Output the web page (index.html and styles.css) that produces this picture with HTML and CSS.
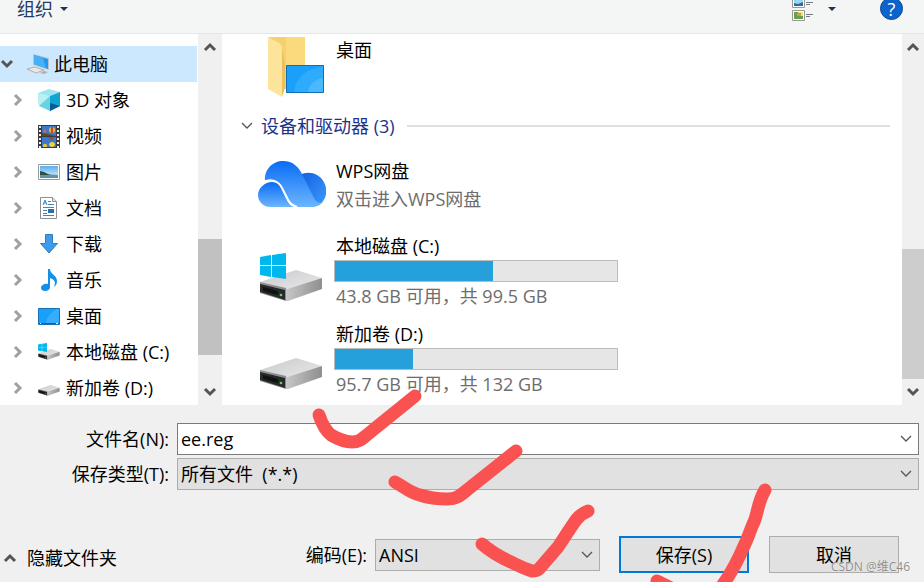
FILE: index.html
```html
<!DOCTYPE html>
<html lang="zh-CN">
<head>
  <meta charset="UTF-8" />
  <meta name="viewport" content="width=device-width, initial-scale=1.0"/>
  <title>另存为</title>
  <link rel="stylesheet" href="styles.css">
</head>
<body>
  <!-- shared symbols -->
  <svg class="defs" width="0" height="0" aria-hidden="true">
    <defs>
      <linearGradient id="gCloudTop" x1="0" y1="0" x2="0" y2="1">
        <stop offset="0" stop-color="#0a6cf5"/><stop offset="1" stop-color="#6cb6ff"/>
      </linearGradient>
      <linearGradient id="gCloudRight" x1="0" y1="0" x2="1" y2="1">
        <stop offset="0" stop-color="#1260dd"/><stop offset="1" stop-color="#3f9bff"/>
      </linearGradient>
      <linearGradient id="gDrive" x1="0" y1="0" x2="1" y2="1">
        <stop offset="0" stop-color="#c9cacc"/><stop offset="1" stop-color="#e8e8ea"/>
      </linearGradient>
      <linearGradient id="gDriveSide" x1="0" y1="0" x2="1" y2="0">
        <stop offset="0" stop-color="#c8c8c8"/><stop offset="1" stop-color="#8f8f8f"/>
      </linearGradient>
      <linearGradient id="gSky" x1="0" y1="0" x2="0" y2="1">
        <stop offset="0" stop-color="#5aaef0"/><stop offset="1" stop-color="#e2f3fb"/>
      </linearGradient>
    </defs>
    <symbol id="right" viewBox="0 0 10 14"><path d="M2 2l5 5-5 5" fill="none" stroke="#a0a0a0" stroke-width="3"/></symbol>
    <symbol id="up" viewBox="0 0 14 10"><path d="M2 8l5-5 5 5" fill="none" stroke="#555" stroke-width="3"/></symbol>
    <symbol id="down" viewBox="0 0 14 10"><path d="M2 2l5 5 5-5" fill="none" stroke="#555" stroke-width="3"/></symbol>
    <symbol id="thin" viewBox="0 0 14 10"><path d="M2 2l5 5 5-5" fill="none" stroke="#555" stroke-width="1.3"/></symbol>
    <symbol id="caret" viewBox="0 0 8 4"><path d="M0 0h8L4 4z" fill="#1c3550"/></symbol>
    <symbol id="drive" viewBox="0 0 64 34">
      <path d="M1 13L37 1l26 8-35 11z" fill="url(#gDrive)"/>
      <path d="M26 19l2 1L63 9v11L29 32h-3z" fill="url(#gDriveSide)"/>
      <path d="M1 13l26 6v13L1 24z" fill="#8d8d8d"/>
      <path d="M1 15l25 6v10L1 23z" fill="#262a2a"/>
      <path d="M4 18l15 4v4L4 22z" fill="#111"/>
      <circle cx="22" cy="26" r="1.300" fill="#65d45a"/>
    </symbol>
    <symbol id="winlogo" viewBox="0 0 26 26">
      <path d="M0 4l11-2v10H0zM12 2l14-2v12H12zM0 13h11v11L0 22zM12 13h14v13l-14-2z" fill="#00b7ee"/>
    </symbol>
  </svg>

  <div class="dialog">
    <header class="toolbar">
      <button class="organize">组织 <svg width="8" height="4"><use href="#caret"/></svg></button>
      <div class="tools">
        <button class="view" aria-label="更改视图">
          <svg width="21" height="24" viewBox="0 0 21 24">
            <path d="M.5.5h12v10H.5zM.5 13.500h12v10H.5z" fill="#fff" stroke="#999"/>
            <path d="M2 2h9v7H2z" fill="#9bd3f3"/><path d="M2 6l4 1 5-2v4H2z" fill="#2b6f93"/>
            <path d="M2 15h9v7H2z" fill="#dce78c"/><path d="M2 15h4l2 4h3v3H2z" fill="#6aa04b"/><path d="M5 16h4v3H5z" fill="#c9a13d"/>
            <path d="M14 5.500h7M14 7.500h4M14 17.500h7M14 19.500h4" stroke="#747b83"/>
          </svg>
        </button>
        <button class="view-more" aria-label="更多选项"><svg width="8" height="4"><use href="#caret"/></svg></button>
        <button class="help" aria-label="帮助">?</button>
      </div>
    </header>

    <main class="panes">
      <nav class="tree">
        <ul>
          <li class="root"><svg class="arrow" width="14" height="10"><use href="#down"/></svg>
            <svg class="icon" width="24" height="22" viewBox="0 0 24 22">
              <path d="M7 1l16 4v12L7 12z" fill="#b9c5ce"/><path d="M8 2l14 4v10L8 11z" fill="#2497ec"/><path d="M8 2l9 3 3 10-12-4z" fill="#46b1f8"/>
              <path d="M1 16l8-2 9 3-8 3z" fill="#e8e8e8" stroke="#b5aeac"/><path d="M14 20l4-2 4 1-4 2z" fill="#c3a7a0"/>
            </svg>
            <a href="#">此电脑</a></li>
          <li><svg class="arrow" width="10" height="14"><use href="#right"/></svg>
            <svg class="icon" width="22" height="22" viewBox="0 0 22 22">
              <path d="M0 4l11-4 11 3-10 4z" fill="#9de5f1"/><path d="M0 4l12 3v15L1 17z" fill="#66d4e5"/><path d="M0 4l12 3-11 10z" fill="#b9f1f5"/>
              <path d="M12 7l10-4v14l-10 5z" fill="#10a4d3"/><path d="M12 14l10 3-10 5z" fill="#0a5c98"/>
            </svg>
            <a href="#">3D 对象</a></li>
          <li><svg class="arrow" width="10" height="14"><use href="#right"/></svg>
            <svg class="icon" width="22" height="23" viewBox="0 0 22 23">
              <path d="M0 0h22v23H0z" fill="#3b3b3b"/><path d="M4 1h14v10H4zM4 12h14v10H4z" fill="#3d78cc"/>
              <path d="M2 1v22M20 1v22" stroke="#eee" stroke-width="2" stroke-dasharray="2 2"/>
              <circle cx="14" cy="5" r="3" fill="#edb63a"/><path d="M13 2h2v6h-2z" fill="#c94a27"/><path d="M4 8l6 1 8 2H4z" fill="#5d4a25"/>
              <path d="M11 20c0-4 6-4 6 0l-2 2h-2z" fill="#f4d32c"/><circle cx="7" cy="6" r="1.500" fill="#d66b37"/><path d="M5 21c0-3 4-3 4 0v1H5z" fill="#efc327"/><path d="M10 12h6l-2 3h-2z" fill="#a14b35"/>
            </svg>
            <a href="#">视频</a></li>
          <li><svg class="arrow" width="10" height="14"><use href="#right"/></svg>
            <svg class="icon" width="22" height="16" viewBox="0 0 22 16">
              <path d="M.5.5h21v15H.5z" fill="#fff" stroke="#9a9a9a"/><path d="M2 2h18v12H2z" fill="url(#gSky)"/>
              <path d="M2 8l6 2 12 1v3H2z" fill="#5f93a8"/><path d="M2 7l4 1 6 3H2z" fill="#2b5145"/>
            </svg>
            <a href="#">图片</a></li>
          <li><svg class="arrow" width="10" height="14"><use href="#right"/></svg>
            <svg class="icon" width="22" height="22" viewBox="0 0 22 22">
              <path d="M2.500.5h12l4 4v17h-16z" fill="#fff" stroke="#8a9095"/><path d="M14.500.5v4h4" fill="#e5e5e5" stroke="#8a9095"/>
              <path d="M5 8l2-5 2 5M6 6h2M10 4.500h3M10 7.500h6M5 10.500h11M5 13.500h4M5 16.500h4M5 18.500h11" fill="none" stroke="#3a87c0"/>
              <path d="M10 12h6v4h-6z" fill="#2d6fa5"/>
            </svg>
            <a href="#">文档</a></li>
          <li><svg class="arrow" width="10" height="14"><use href="#right"/></svg>
            <svg class="icon" width="22" height="20" viewBox="0 0 22 20"><path d="M7.500.5h7v9h5L11 19 2.500 9.500h5z" fill="#3f9bea" stroke="#2d7cc4"/></svg>
            <a href="#">下载</a></li>
          <li><svg class="arrow" width="10" height="14"><use href="#right"/></svg>
            <svg class="icon" width="22" height="22" viewBox="0 0 22 22">
              <path d="M10 0h2c0 5 7 6 7 12 0 3-1 4-3 6 2-5 1-7-4-9v9c0 3-3 4-5 4s-4-1-4-3c0-3 4-5 7-4z" fill="#1390ea"/>
            </svg>
            <a href="#">音乐</a></li>
          <li><svg class="arrow" width="10" height="14"><use href="#right"/></svg>
            <svg class="icon" width="22" height="17" viewBox="0 0 22 17">
              <path d="M.5.5h21v16H.5z" fill="#18a0fb" stroke="#1672b4"/><path d="M8 15c1-6 4-10 11-14h2v14z" fill="#36aefd"/><path d="M1 15.500h20" stroke="#0a63a8"/><path d="M2 15.500h1M18 15.500h2" stroke="#fff"/>
            </svg>
            <a href="#">桌面</a></li>
          <li><svg class="arrow" width="10" height="14"><use href="#right"/></svg>
            <svg class="icon" width="22" height="18" viewBox="0 0 22 18">
              <use href="#drive" x="0" y="5" width="22" height="13"/><use href="#winlogo" width="9" height="9"/>
            </svg>
            <a href="#">本地磁盘 (C:)</a></li>
          <li><svg class="arrow" width="10" height="14"><use href="#right"/></svg>
            <svg class="icon" width="22" height="18" viewBox="0 0 22 18"><use href="#drive" x="0" y="5" width="22" height="13"/></svg>
            <a href="#">新加卷 (D:)</a></li>
        </ul>
      </nav>
      <div class="scrollbar tree-scroll">
        <button aria-label="向上"><svg width="14" height="10"><use href="#up"/></svg></button>
        <div class="thumb"></div>
        <button aria-label="向下"><svg width="14" height="10"><use href="#down"/></svg></button>
      </div>

      <section class="files">
        <div class="item folder">
          <svg class="pic" width="68" height="61" viewBox="0 0 68 61">
            <path d="M10 0h37v52H24z" fill="#f5d16d"/><path d="M28 0h19v28H28z" fill="#fada7c"/><path d="M10 0l11 6c3 2 3 3 3 6v48L10 52z" fill="#fce59b"/>
            <path d="M24 12l3 16v23l-3 9z" fill="#e9c05c"/>
            <path d="M28.500 28.500h37v27h-37z" fill="#18a0fb" stroke="#126fb2"/><path d="M36 55c1-13 11-23 29-26v26z" fill="#2dabfd"/><path d="M50 55c1-8 7-13 15-14v14z" fill="#4ab8fe"/>
          </svg>
          <div class="info"><p>桌面</p></div>
        </div>
        <h2 class="group"><svg width="14" height="10"><use href="#thin"/></svg><span>设备和驱动器 (3)</span></h2>
        <div class="item wps">
          <svg class="pic" width="68" height="46" viewBox="0 0 68 46">
            <path d="M42 14c5-3 12-3 17 0 12 7 12 24 2 30-6 3-12 2-17-2z" fill="url(#gCloudRight)"/>
            <path d="M7 20C6 8 15 0 25 0c10 0 16 6 20 15l11 22c2 4 5 6 9 4-4 4-8 5-12 5H38c-4-2-6-4-8-9l-5-9c-4-8-11-11-18-8z" fill="url(#gCloudTop)"/>
            <path d="M14 21c6 0 9 4 11 9l4 9c2 4 4 6 7 7H12C5 46 0 40 0 34c0-7 7-13 14-13z" fill="url(#gCloudTop)"/>
            <path d="M3 22c9-5 17-3 21 5l5 10c2 5 5 7 10 9" fill="none" stroke="#fff" stroke-width="2"/>
          </svg>
          <div class="info"><p>WPS网盘</p><p class="sub">双击进入WPS网盘</p></div>
        </div>
        <div class="item disk">
          <svg class="pic" width="68" height="50" viewBox="0 0 68 50"><use href="#drive" x="1" y="16" width="64" height="34"/><use href="#winlogo" x="2" width="26" height="26"/></svg>
          <div class="info"><p>本地磁盘 (C:)</p><div class="bar"><div class="fill" style="width: 56%"></div></div><p class="sub">43.8 GB 可用，共 99.5 GB</p></div>
        </div>
        <div class="item disk">
          <svg class="pic" width="68" height="50" viewBox="0 0 68 50"><use href="#drive" x="1" y="16" width="64" height="34"/></svg>
          <div class="info"><p>新加卷 (D:)</p><div class="bar"><div class="fill" style="width: 27.600%"></div></div><p class="sub">95.7 GB 可用，共 132 GB</p></div>
        </div>
      </section>
      <div class="scrollbar file-scroll">
        <button aria-label="向上"><svg width="14" height="10"><use href="#up"/></svg></button>
        <div class="thumb"></div>
        <button aria-label="向下"><svg width="14" height="10"><use href="#down"/></svg></button>
      </div>
    </main>

    <footer class="bottom">
      <div class="form">
        <label for="filename">文件名(N):</label>
        <div class="combo"><input id="filename" type="text" value="ee.reg"><svg width="14" height="10"><use href="#thin"/></svg></div>
        <label for="filetype">保存类型(T):</label>
        <div class="combo"><select id="filetype"><option>所有文件&nbsp; (*.*)</option></select><svg width="14" height="10"><use href="#thin"/></svg></div>
      </div>
      <div class="actions">
        <button class="hide"><svg width="14" height="10"><use href="#up"/></svg>隐藏文件夹</button>
        <label for="encoding">编码(E):</label>
        <div class="combo encoding"><select id="encoding"><option>ANSI</option></select><svg width="14" height="10"><use href="#thin"/></svg></div>
        <button class="btn save">保存(S)</button>
        <button class="btn">取消</button>
      </div>
    </footer>

    <!-- hand drawn ticks -->
    <svg class="marks" width="924" height="582" viewBox="0 0 924 582" aria-hidden="true">
      <path d="M319 415c3 9 7 16 12 20 7 4 13 7 21 7 8 0 11-4 16-8l47-38"/>
      <path d="M395 482c8 4 15 11 25 13 9 3 17 4 27 4 10 0 14-4 20-9l49-39"/>
      <path d="M482 544c8 7 18 13 29 18 8 4 14 7 21 9 3 0 5 0 7-2l19-22c8-12 13-20 18-27 3-4 7-7 12-9"/>
      <path d="M765 490c-8 13-7 25-12 34-3 7-5 14-9 22-6 14-12 26-22 40M657 581l24 12"/>
    </svg>
    <div class="watermark">CSDN @维C46</div>
  </div>
</body>
</html>
```
FILE: styles.css
```css
* { box-sizing: border-box; margin: 0; padding: 0; }
body { font-family: "Open Sans", "Noto Sans CJK SC", sans-serif; font-size: 18px; line-height: 28px; color: #000; background: #f0f0f0; }
button, input, select { font: inherit; color: inherit; border: none; background: none; }
button { cursor: pointer; }
svg { flex: none; display: block; }
a { color: inherit; text-decoration: none; }
.defs { position: absolute; }

.dialog { position: relative; height: 100vh; display: flex; flex-direction: column; overflow: hidden; }

.toolbar { height: 34px; flex: none; display: flex; align-items: center; justify-content: space-between; padding: 0 21px 16px 17px; background: #f4f6f6; border-bottom: 1px solid #e6e8e8; }
.organize { display: flex; align-items: center; gap: 7px; color: #26395f; }
.tools { display: flex; align-items: center; }
.view-more { margin: 0 44px 0 15px; }
.help { width: 23px; height: 23px; border-radius: 50%; border: 1px solid #0a4a93; background: #0b64cc; color: #fff; line-height: 20px; }

.panes { flex: 1; min-height: 0; display: flex; background: #fff; overflow: hidden; }
.tree { width: 197px; flex: none; padding-top: 12px; overflow: hidden; margin-right: 1px; }
.tree ul { list-style: none; }
.tree li { height: 36px; display: flex; align-items: center; padding-left: 13px; white-space: nowrap; }
.tree .icon { margin: 0 6px 0 15px; }
.tree .root { background: #cce8ff; padding-left: 0; }
.tree .root .icon { margin: 0 4px 0 12px; }

.scrollbar { width: 24px; flex: none; display: flex; flex-direction: column; background: #f0f0f0; }
.scrollbar button { height: 26px; display: flex; align-items: center; justify-content: center; }
.scrollbar .thumb { margin-top: auto; background: #cdcdcd; }
.tree-scroll .thumb { height: 116px; margin-bottom: 24px; background: #c1c1c1; }
.file-scroll { width: 22px; }
.file-scroll .thumb { height: 130px; }

.files { flex: 1; min-width: 0; padding: 2px 12px 0 36px; overflow: hidden; }
.item { display: flex; gap: 8px; margin-bottom: 10px; }
.info { width: 284px; }
.info p { padding-left: 2px; white-space: nowrap; }
.info .sub { color: #6d6d6d; }
.folder { margin-bottom: 14px; }
.folder .pic { margin-top: 1px; }
.group { display: flex; align-items: center; font-size: 18px; font-weight: normal; color: #1e3287; margin: 0 0 17px -18px; }
.group span { margin: 0 12px 0 7px; }
.group::after { content: ""; flex: 1; height: 2px; background: #e0e0e0; }
.wps { margin-bottom: 19px; }
.wps .pic { margin-top: 4px; }
.disk .pic { margin-top: 21px; }
.bar { height: 22px; border: 1px solid #bcbcbc; background: #e6e6e6; }
.fill { height: 100%; background: #26a0da; }

.bottom { flex: none; padding: 18px 5px 9px 0; }
.form { display: grid; grid-template-columns: 169px 1fr; column-gap: 8px; row-gap: 3px; align-items: center; }
.form label { text-align: right; }
.combo { position: relative; }
.combo input, .combo select { width: 100%; height: 32px; display: block; padding: 0 30px 0 3px; border: 1px solid #7a7a7a; background: #fff; appearance: none; outline: none; }
.combo select { border-color: #adadad; background: #e1e1e1; }
.combo svg { position: absolute; right: 6px; top: 11px; pointer-events: none; }
.actions { display: flex; align-items: center; margin-top: 46px; padding-right: 20px; }
.hide { display: flex; align-items: center; gap: 10px; padding: 6px 0 0 3px; margin-right: auto; }
.encoding { width: 225px; margin: 0 19px 0 8px; }
.btn { width: 130px; height: 37px; border: 1px solid #adadad; background: #e1e1e1; }
.save { border: 2px solid #0078d7; margin-right: 20px; }

.marks { position: absolute; top: 0; left: 0; pointer-events: none; fill: none; stroke: #fa5151; stroke-width: 13; stroke-linecap: round; stroke-linejoin: round; }
.watermark { position: absolute; right: 14px; bottom: 5px; font-size: 12px; line-height: 20px; color: #8c8c8c; text-shadow: 0 0 1px #fff; }
```
